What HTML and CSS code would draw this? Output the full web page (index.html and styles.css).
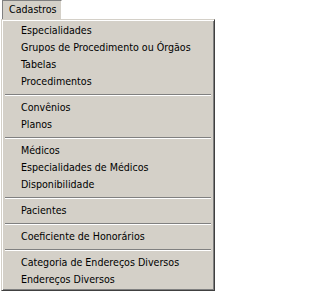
FILE: index.html
```html
<!DOCTYPE html>
<html lang="pt-BR">
<head>
<meta charset="utf-8">
<link rel="stylesheet" href="styles.css">
</head>
<body>
<div class="menubar">
  <div class="menu-title">Cadastros</div>
</div>
<div class="popup">
  <div class="item">Especialidades</div>
  <div class="item">Grupos de Procedimento ou Órgãos</div>
  <div class="item">Tabelas</div>
  <div class="item">Procedimentos</div>
  <div class="sep"></div>
  <div class="item">Convênios</div>
  <div class="item">Planos</div>
  <div class="sep"></div>
  <div class="item">Médicos</div>
  <div class="item">Especialidades de Médicos</div>
  <div class="item">Disponibilidade</div>
  <div class="sep"></div>
  <div class="item">Pacientes</div>
  <div class="sep"></div>
  <div class="item">Coeficiente de Honorários</div>
  <div class="sep"></div>
  <div class="item">Categoria de Endereços Diversos</div>
  <div class="item">Endereços Diversos</div>
</div>
</body>
</html>
```
FILE: styles.css
```css
html, body {
  margin: 0;
  padding: 0;
  background: #ffffff;
}
body {
  font-family: "DejaVu Sans Condensed", "DejaVu Sans", sans-serif;
  font-size: 10.6px;
  color: #000;
  width: 216px;
  height: 291px;
  overflow: hidden;
}
.menubar {
  display: flex;
  height: 19px;
  padding-left: 2px;
}
.menu-title {
  box-sizing: border-box;
  width: 60px;
  height: 19px;
  padding-left: 6px;
  line-height: 17px;
  background: #d4d0c8;
  border-top: 1px solid #808080;
  border-left: 1px solid #808080;
  border-right: 1px solid #ffffff;
}
.popup {
  box-sizing: border-box;
  width: 214px;
  margin-left: 1px;
  background: #d4d0c8;
  border: 1px solid;
  border-color: #d4d0c8 #404040 #404040 #d4d0c8;
  box-shadow: inset 1px 1px 0 #ffffff, inset -1px -1px 0 #808080;
  padding: 2px;
}
.item {
  height: 17px;
  line-height: 17px;
  padding-left: 17px;
  white-space: nowrap;
}
.sep {
  margin: 4px 1px 3px;
  border-top: 1px solid #808080;
  border-bottom: 1px solid #ffffff;
}
```
